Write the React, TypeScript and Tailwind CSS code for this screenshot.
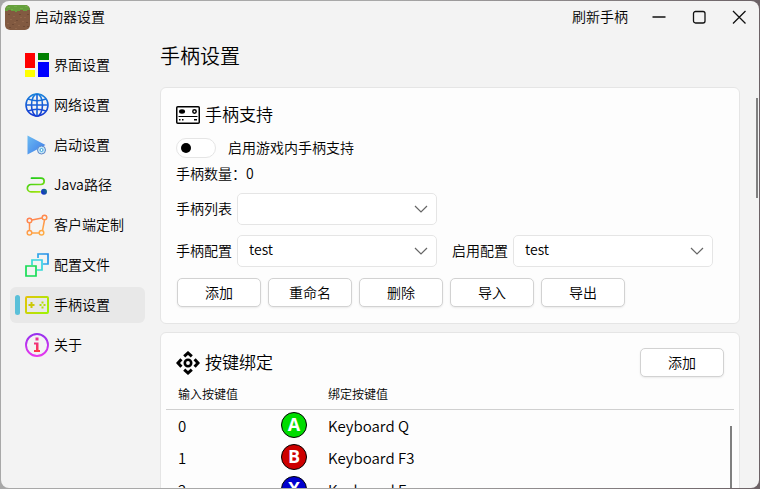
import { useState } from "react";
import type { ReactNode } from "react";

function GrassBlock() {
  const specks = [
    [3, 9], [8, 11], [14, 9], [19, 12], [22, 9], [5, 14], [11, 15], [17, 16], [21, 17], [2, 18],
    [7, 19], [13, 20], [18, 21], [10, 23], [4, 22], [15, 12], [22, 21], [9, 17],
  ];
  return (
    <svg width="25" height="25" viewBox="0 0 25 25" aria-hidden="true">
      <defs>
        <clipPath id="block">
          <rect width="25" height="25" rx="5" />
        </clipPath>
      </defs>
      <g clipPath="url(#block)">
        <rect width="25" height="25" fill="#825a41" />
        {specks.map(([x, y], i) => (
          <rect key={i} x={x} y={y} width="2" height="1" fill={i % 2 ? "#91664a" : "#6f4a35"} />
        ))}
        <path d="M0 0h25v5h-3v1h-4v-1h-3v1h-3v1h-2v-1h-4v-1h-3v1h-3z" fill="#66a03d" />
        <path d="M2 2h3v1h-3zM9 1h3v1h-3zM15 3h3v1h-3zM20 1h3v1h-3zM6 4h2v1h-2z" fill="#72ae46" />
      </g>
    </svg>
  );
}

const icon = { width: 24, height: 24, viewBox: "0 0 24 24", fill: "none", "aria-hidden": true } as const;

const BlocksIcon = () => (
  <svg {...icon}>
    <path fill="#f00" d="M0 0h10v15H0z" />
    <path fill="#008000" d="M13 0h11v7H13z" />
    <path fill="#ff0" d="M0 17h10v7H0z" />
    <path fill="#00f" d="M13 9h11v15H13z" />
  </svg>
);

const GlobeIcon = () => (
  <svg {...icon} stroke="url(#globe)" strokeWidth="1.600">
    <defs>
      <linearGradient id="globe" x1="0" y1="0" x2="0" y2="24" gradientUnits="userSpaceOnUse">
        <stop stopColor="#1a86dc" />
        <stop offset="1" stopColor="#1534d2" />
      </linearGradient>
    </defs>
    <circle cx="12" cy="12" r="11" />
    <ellipse cx="12" cy="12" rx="5.500" ry="11" />
    <path d="M1 12h22M3 6q9 3.500 18 0M3 18q9-3.500 18 0" />
    <path d="M12 1v22" stroke="#1760d8" />
  </svg>
);

const PlayIcon = () => (
  <svg {...icon}>
    <defs>
      <linearGradient id="play" x1="2" y1="3" x2="22" y2="20" gradientUnits="userSpaceOnUse">
        <stop stopColor="#6dbcf2" />
        <stop offset="1" stopColor="#3b78e8" />
      </linearGradient>
    </defs>
    <path d="M2.500 2.500 20.500 12 2.500 21.500z" fill="url(#play)" />
    <circle cx="16.500" cy="17" r="4" fill="#c4e7f8" stroke="#5d85c8" />
    <circle cx="16.500" cy="17" r="1.500" fill="#fff" stroke="#3ba4de" />
  </svg>
);

const PathIcon = () => (
  <svg {...icon}>
    <defs>
      <linearGradient id="route" x1="6" y1="4" x2="12" y2="20" gradientUnits="userSpaceOnUse">
        <stop stopColor="#16c916" />
        <stop offset="1" stopColor="#a2e410" />
      </linearGradient>
      <linearGradient id="dot" x1="16" y1="20" x2="22" y2="16" gradientUnits="userSpaceOnUse">
        <stop stopColor="#1428d2" />
        <stop offset="1" stopColor="#137a78" />
      </linearGradient>
    </defs>
    <path d="M6.500 5.200H16a2.900 2.900 0 0 1 0 6.300H6a3.600 3.600 0 0 0 0 7.300h9" stroke="url(#route)" strokeWidth="1.700" strokeLinecap="round" />
    <circle cx="19" cy="18.800" r="3" fill="url(#dot)" />
  </svg>
);

const PolygonIcon = () => (
  <svg {...icon} stroke="url(#poly)" strokeWidth="1.500">
    <defs>
      <linearGradient id="poly" x1="3" y1="3" x2="12" y2="22" gradientUnits="userSpaceOnUse">
        <stop stopColor="#ff7a52" />
        <stop offset="1" stopColor="#ffab45" />
      </linearGradient>
    </defs>
    <path d="m7 7 10-2M4.500 9.500v8M7 20h7M17.500 17.500l2-10.500" />
    <circle cx="4.500" cy="7.500" r="2.300" />
    <circle cx="19.500" cy="4.500" r="2.300" />
    <circle cx="4.500" cy="19.800" r="2.300" />
    <circle cx="16.500" cy="19.800" r="2.300" />
  </svg>
);

const FilesIcon = () => (
  <svg {...icon} strokeWidth="1.700">
    <defs>
      <linearGradient id="f1" x1="13" y1="11" x2="24" y2="1" gradientUnits="userSpaceOnUse">
        <stop stopColor="#35b9ee" />
        <stop offset="1" stopColor="#2289e6" />
      </linearGradient>
      <linearGradient id="f2" x1="7" y1="17" x2="17" y2="7" gradientUnits="userSpaceOnUse">
        <stop stopColor="#37e3c3" />
        <stop offset="1" stopColor="#35ceeb" />
      </linearGradient>
    </defs>
    <path d="M13 5V1h10v10h-5" stroke="url(#f1)" />
    <path d="M7 12V7h10v10h-5" stroke="url(#f2)" />
    <path d="M1 13h10v10H1z" stroke="#16dc55" />
  </svg>
);

const GamepadIcon = () => (
  <svg {...icon}>
    <defs>
      <linearGradient id="pad" x1="0" y1="4" x2="24" y2="20" gradientUnits="userSpaceOnUse">
        <stop stopColor="#e6c30a" />
        <stop offset="1" stopColor="#9af505" />
      </linearGradient>
    </defs>
    <rect x="1" y="4" width="22" height="16" rx="1" stroke="url(#pad)" strokeWidth="2" />
    <path d="M6.500 9v6M3.500 12h6" stroke="#ccc908" strokeWidth="2" />
    <path d="M17.500 8.500v2M17.500 13.500v2M14.500 12h2M18.500 12h2" stroke="#b4de08" strokeWidth="2" />
  </svg>
);

const InfoIcon = () => (
  <svg {...icon}>
    <defs>
      <linearGradient id="ring" x1="12" y1="0" x2="12" y2="24" gradientUnits="userSpaceOnUse">
        <stop stopColor="#9430ee" />
        <stop offset="1" stopColor="#ea38ee" />
      </linearGradient>
      <linearGradient id="eye" x1="12" y1="5" x2="12" y2="19" gradientUnits="userSpaceOnUse">
        <stop stopColor="#e8309c" />
        <stop offset="1" stopColor="#ff3848" />
      </linearGradient>
    </defs>
    <circle cx="12" cy="12" r="11" stroke="url(#ring)" strokeWidth="1.900" />
    <path d="M10.500 4.500h3v3h-3zM9 9.500h4.500V17H15v2H9v-2h2v-5.500H9z" fill="url(#eye)" />
  </svg>
);

const ReceiverIcon = () => (
  <svg {...icon}>
    <rect x=".75" y="3.750" width="22.500" height="16.500" rx="1" stroke="#000" strokeWidth="1.500" fill="#fff" />
    <ellipse cx="6" cy="8.500" rx="3" ry="2.200" fill="#000" />
    <circle cx="18.500" cy="8.500" r="1.700" stroke="#000" strokeWidth="1.500" />
    <path d="M2.500 13.500h19" stroke="#000" strokeWidth="1.200" />
    <path d="M3 16.800h1.500M6 16.800h1.500M18 16.800h3" stroke="#000" strokeWidth="1.400" />
  </svg>
);

const DpadIcon = () => (
  <svg {...icon} stroke="#000" strokeWidth="3">
    <circle cx="12" cy="12" r="3.200" strokeWidth="2.600" />
    <path d="M8.200 5.400 12 2l3.800 3.400M8.200 18.600 12 22l3.800-3.400M5.400 8.200 2 12l3.400 3.800M18.600 8.200 22 12l-3.400 3.800" />
  </svg>
);

const navItems: { label: string; Icon: () => ReactNode }[] = [
  { label: "界面设置", Icon: BlocksIcon },
  { label: "网络设置", Icon: GlobeIcon },
  { label: "启动设置", Icon: PlayIcon },
  { label: "Java路径", Icon: PathIcon },
  { label: "客户端定制", Icon: PolygonIcon },
  { label: "配置文件", Icon: FilesIcon },
  { label: "手柄设置", Icon: GamepadIcon },
  { label: "关于", Icon: InfoIcon },
];

const bindings = [
  { input: "0", key: "A", color: "bg-[#00dc00]", target: "Keyboard Q" },
  { input: "1", key: "B", color: "bg-[#cd0000]", target: "Keyboard F3" },
  { input: "2", key: "X", color: "bg-[#0000cd]", target: "Keyboard E" },
];

function Button({ children }: { children: ReactNode }) {
  return (
    <button type="button" className="h-[29px] w-[84px] rounded-[5px] border border-[#d2d2d2] bg-white pb-0.5 text-center shadow-[0_1px_2px_rgba(0,0,0,0.08)] hover:bg-gray-50">
      {children}
    </button>
  );
}

function Select({ id, label, options }: { id: string; label: string; options: string[] }) {
  return (
    <div className="flex items-center gap-[5px]">
      <label htmlFor={id} className="w-14 pb-0.5">{label}</label>
      <div className="relative">
        <select id={id} className="block h-8 w-[200px] appearance-none rounded-[5px] border border-[#e5e5e5] bg-white pr-8 pb-1 pl-[11px]">
          {options.map((o) => <option key={o}>{o}</option>)}
        </select>
        <svg className="pointer-events-none absolute top-3 right-[9px]" width="14" height="8" viewBox="0 0 14 8" fill="none" aria-hidden="true">
          <path d="m1 1 6 6 6-6" stroke="#666" strokeWidth="1.200" />
        </svg>
      </div>
    </div>
  );
}

export default function App() {
  const [active, setActive] = useState("手柄设置");
  return (
    <div className="h-screen bg-[linear-gradient(to_right,#a8a8a8_50%,#6c6266)] p-px font-['Noto_Sans_CJK_SC',sans-serif] text-sm leading-5 font-[350] text-black">
      <div className="flex h-full flex-col overflow-hidden rounded-lg bg-[#f3f3f3]">
        <header className="flex h-8 shrink-0 items-center pl-1">
          <GrassBlock />
          <h1 className="ml-[5px] flex-1 pb-0.5">启动器设置</h1>
          <button type="button" className="px-[11px] pb-0.5">刷新手柄</button>
          <button type="button" aria-label="最小化" className="flex h-8 w-10 items-center justify-center">
            <svg width="14" height="14" viewBox="0 0 14 14"><path d="M.5 7h13" stroke="#111" strokeWidth="1.300" /></svg>
          </button>
          <button type="button" aria-label="最大化" className="flex h-8 w-10 items-center justify-center">
            <svg width="14" height="14" viewBox="0 0 14 14"><rect x="1.500" y="1.500" width="11.500" height="11.500" rx="2" fill="none" stroke="#111" strokeWidth="1.300" /></svg>
          </button>
          <button type="button" aria-label="关闭" className="flex h-8 w-10 items-center justify-center">
            <svg width="14" height="14" viewBox="0 0 14 14"><path d="m1 1 12.500 12.500M13.500 1 1 13.500" stroke="#111" strokeWidth="1.300" /></svg>
          </button>
        </header>

        <div className="flex min-h-0 flex-1">
          <nav className="flex w-36 shrink-0 flex-col gap-1 pt-3.5 pl-[9px]">
            {navItems.map(({ label, Icon }) => (
              <button
                key={label}
                type="button"
                onClick={() => setActive(label)}
                aria-current={active === label ? "page" : undefined}
                className={active === label ? "flex h-9 items-center rounded-md bg-[#e8e8e8] pl-[5px]" : "flex h-9 items-center rounded-md pl-[5px]"}
              >
                <span className={active === label ? "h-5 w-[5px] rounded-full bg-[#5bc0d9]" : "h-5 w-[5px]"} />
                <span className="ml-[5px]"><Icon /></span>
                <span className="ml-[5px] pb-0.5">{label}</span>
              </button>
            ))}
          </nav>

          <main className="relative min-w-0 flex-1 overflow-hidden pr-[19px] pl-[15px]">
            <h2 className="pt-[7px] pb-px text-xl leading-8">手柄设置</h2>
            <section className="mt-3.5 rounded-md border border-[#e5e5e5] bg-[#fdfdfd] px-[15px] pt-[15px] pb-4">
              <h3 className="flex h-6 items-center gap-[5px] text-[17px]"><ReceiverIcon /><span className="pb-0.5">手柄支持</span></h3>
              <label className="mt-[11px] flex h-5 items-center gap-3">
                <input type="checkbox" role="switch" className="h-5 w-10 appearance-none rounded-full border border-[#e5e5e5] bg-white before:mt-1 before:ml-1 before:block before:size-2.5 before:rounded-full before:bg-black checked:bg-[#5bc0d9] checked:before:ml-6" />
                <span className="pb-0.5">启用游戏内手柄支持</span>
              </label>
              <p className="mt-[5px]">手柄数量：0</p>
              <div className="mt-2.5 flex flex-col gap-2.5">
                <Select id="pad-list" label="手柄列表" options={[""]} />
                <div className="flex gap-[15px]">
                  <Select id="pad-config" label="手柄配置" options={["test"]} />
                  <Select id="enabled-config" label="启用配置" options={["test"]} />
                </div>
                <div className="flex gap-[7px] pt-px pl-px">
                  <Button>添加</Button>
                  <Button>重命名</Button>
                  <Button>删除</Button>
                  <Button>导入</Button>
                  <Button>导出</Button>
                </div>
              </div>
            </section>

            <section className="relative mt-2 h-96 rounded-md border border-[#e5e5e5] bg-[#fdfdfd] px-[5px] pt-[15px]">
              <div className="flex items-center justify-between px-2.5">
                <h3 className="flex items-center gap-[5px] text-[17px]"><DpadIcon /><span className="pb-0.5">按键绑定</span></h3>
                <Button>添加</Button>
              </div>
              <table className="w-full table-fixed text-left">
                <thead>
                  <tr className="h-8 border-b border-[#d0d0d0] text-xs">
                    <th className="w-[115px] pt-0.5 pl-3 font-[350]" scope="col">输入按键值</th>
                    <th className="w-[47px]" scope="col" aria-label="按键" />
                    <th className="pt-0.5 font-[350]" scope="col">绑定按键值</th>
                  </tr>
                </thead>
                <tbody>
                  {bindings.map((b) => (
                    <tr key={b.input} className="h-8 text-[15px]">
                      <td className="pt-0.5 pl-3">{b.input}</td>
                      <td>
                        <span className={`flex size-[26px] items-center justify-center rounded-full border border-black pb-0.5 font-['Open_Sans',sans-serif] text-lg font-bold text-white ${b.color}`}>{b.key}</span>
                      </td>
                      <td className="pt-0.5">{b.target}</td>
                    </tr>
                  ))}
                </tbody>
              </table>
              <span className="absolute top-[93px] right-[7px] bottom-0 w-0.5 bg-[#808080]" />
            </section>
            <span className="absolute top-[65px] right-px h-[100px] w-0.5 bg-[#808080]" />
          </main>
        </div>
      </div>
    </div>
  );
}
